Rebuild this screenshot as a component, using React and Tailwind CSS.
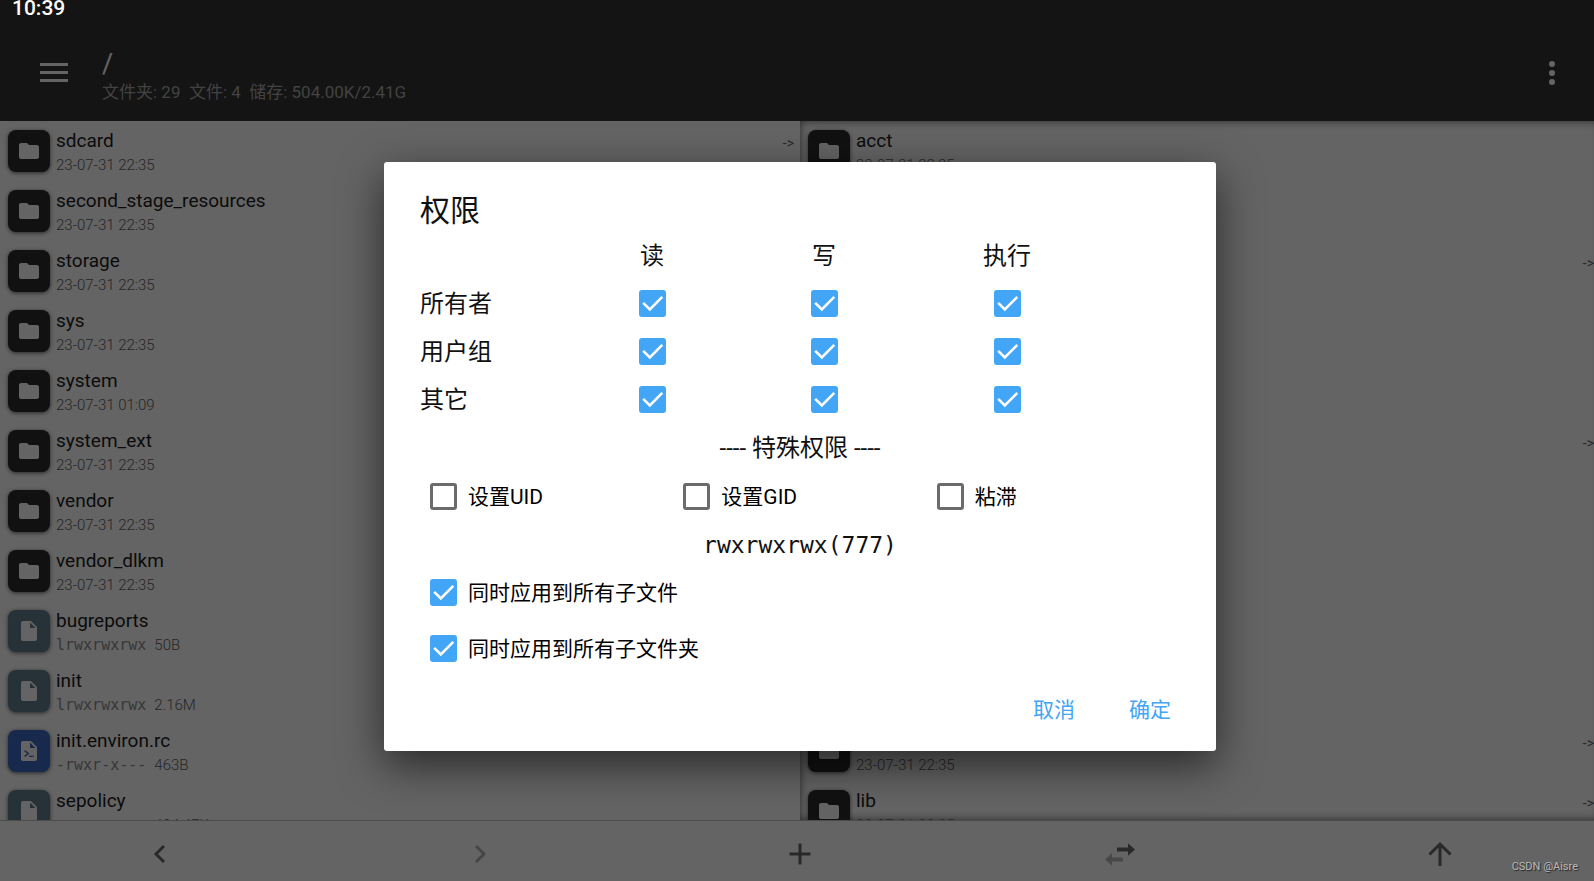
import React, { useState } from "react";
import { MdFolder, MdInsertDriveFile, MdAdd } from "react-icons/md";

const leftFiles = [
  { name: "sdcard", date: "23-07-31 22:35", link: true },
  { name: "second_stage_resources", date: "23-07-31 22:35" },
  { name: "storage", date: "23-07-31 22:35" },
  { name: "sys", date: "23-07-31 22:35" },
  { name: "system", date: "23-07-31 01:09" },
  { name: "system_ext", date: "23-07-31 22:35" },
  { name: "vendor", date: "23-07-31 22:35" },
  { name: "vendor_dlkm", date: "23-07-31 22:35" },
  { name: "bugreports", type: "file", mode: "lrwxrwxrwx", size: "50B" },
  { name: "init", type: "file", mode: "lrwxrwxrwx", size: "2.16M" },
  { name: "init.environ.rc", type: "script", mode: "-rwxr-x---", size: "463B" },
  { name: "sepolicy", type: "file", mode: "-rw-r--r--", size: "494.47K" },
];

const rightFiles = [
  { name: "acct", date: "23-07-31 22:35" },
  { name: "apex", date: "23-07-31 22:35" },
  { name: "bin", date: "23-07-31 22:35", link: true },
  { name: "cache", date: "23-07-31 22:35" },
  { name: "config", date: "23-07-31 22:35" },
  { name: "d", date: "23-07-31 22:35", link: true },
  { name: "data", date: "23-07-31 22:35" },
  { name: "data_mirror", date: "23-07-31 22:35" },
  { name: "debug_ramdisk", date: "23-07-31 22:35" },
  { name: "dev", date: "23-07-31 22:35" },
  { name: "etc", date: "23-07-31 22:35", link: true },
  { name: "lib", date: "23-07-31 22:35", link: true },
];

const iconColors = {
  folder: "bg-[#2b2b2b]",
  file: "bg-[#607d8b]",
  script: "bg-[#3c66c4]",
};

function FileIcon({ type = "folder" }) {
  return (
    <span
      className={`flex size-[42px] shrink-0 items-center justify-center rounded-lg text-[#fafafa] shadow-[0_1px_4px_rgba(0,0,0,0.6)] ${iconColors[type]}`}
    >
      {type === "folder" ? (
        <MdFolder className="size-6" />
      ) : (
        <MdInsertDriveFile className="size-6" />
      )}
      {type === "script" && (
        <svg
          viewBox="0 0 24 24"
          className="absolute size-6 fill-none stroke-[#3c66c4] stroke-[1.4]"
        >
          <path d="M7.6 11.6l3.8 2.9-3.8 2.9M12 17.4h4.7" />
        </svg>
      )}
    </span>
  );
}

function FileList({ files }) {
  return (
    <ul>
      {files.map((file) => (
        <li key={file.name} className="flex h-[60px] items-start pt-[9px] pr-1.5 pl-2">
          <FileIcon type={file.type} />
          <div className="ml-1.5 min-w-0 flex-1">
            <p className="text-[19px] leading-[22px] text-[#1c1c1c]">{file.name}</p>
            <p className="mt-[3px] text-[15px] leading-5 font-light text-[#606060]">
              {file.mode && (
                <span className="mr-2 font-['DejaVu_Sans_Mono',monospace] text-[#8a8a8a]">
                  {file.mode}
                </span>
              )}
              {file.date || file.size}
            </p>
          </div>
          {file.link && (
            <span className="mt-[5px] text-[14px] leading-4 text-[#666]">-&gt;</span>
          )}
        </li>
      ))}
    </ul>
  );
}

function Checkbox({ id, label, defaultChecked }) {
  const [checked, setChecked] = useState(!!defaultChecked);

  return (
    <span className="relative block size-[27px] shrink-0">
      <input
        id={id}
        type="checkbox"
        aria-label={label}
        checked={checked}
        onChange={(e) => setChecked(e.target.checked)}
        className="block size-[27px] appearance-none rounded-[3px] border-3 border-[#6b6b6b] checked:border-[#42a5f5] checked:bg-[#42a5f5]"
      />
      {checked && (
        <svg
          viewBox="0 0 27 27"
          className="pointer-events-none absolute inset-0 fill-none stroke-white stroke-[2.6]"
        >
          <path d="M4.2 12.8l6.6 6.6L23.3 6.9" />
        </svg>
      )}
    </span>
  );
}

function PermissionDialog() {
  const groups = ["所有者", "用户组", "其它"];
  const perms = ["读", "写", "执行"];
  const special = ["设置UID", "设置GID", "粘滞"];
  const apply = ["同时应用到所有子文件", "同时应用到所有子文件夹"];

  return (
    <div
      role="dialog"
      aria-labelledby="dialog-title"
      className="w-[52%] rounded-[3px] bg-white px-9 pt-7 pb-4 text-[#111] shadow-[0_14px_44px_rgba(0,0,0,0.6)]"
    >
      <h2 id="dialog-title" className="text-[30px] leading-[42px]">
        权限
      </h2>

      <table className="table-fixed text-2xl">
        <thead>
          <tr className="h-12">
            <td className="w-[146px]" />
            {perms.map((perm) => (
              <th
                key={perm}
                className="w-[172px] font-normal last:w-[194px]"
              >
                {perm}
              </th>
            ))}
          </tr>
        </thead>
        <tbody>
          {groups.map((group) => (
            <tr key={group} className="h-12">
              <th className="text-left font-normal">{group}</th>
              {perms.map((perm) => (
                <td key={perm} className="pb-0.5">
                  <div className="flex justify-center">
                    <Checkbox label={`${group} ${perm}`} defaultChecked />
                  </div>
                </td>
              ))}
            </tr>
          ))}
        </tbody>
      </table>

      <p className="text-center text-2xl leading-12">---- 特殊权限 ----</p>

      <div className="grid grid-cols-3">
        {special.map((name, i) => (
          <label
            key={name}
            htmlFor={`special-${i}`}
            className="flex h-[50px] items-center gap-[11px] pb-0.5 pl-2.5 text-[21px] text-black"
          >
            <Checkbox id={`special-${i}`} />
            <span className="pt-1">{name}</span>
          </label>
        ))}
      </div>

      <p className="pt-1 text-center font-['DejaVu_Sans_Mono',monospace] text-[23px] leading-[38px]">
        rwxrwxrwx(777)
      </p>

      {apply.map((name, i) => (
        <label
          key={name}
          htmlFor={`apply-${i}`}
          className="flex h-14 items-center gap-[11px] pl-2.5 text-[21px] text-black"
        >
          <Checkbox id={`apply-${i}`} defaultChecked />
          <span className="pt-1">{name}</span>
        </label>
      ))}

      <div className="mt-[11px] -mr-3 flex h-12 justify-end gap-3 text-[21px] text-[#42a5f5]">
        <button type="button" className="w-[84px]">
          取消
        </button>
        <button type="button" className="w-[84px]">
          确定
        </button>
      </div>
    </div>
  );
}

function Header() {
  return (
    <header className="flex h-[121px] shrink-0 flex-col bg-[#323232] text-[#fafafa]">
      <div className="relative z-20 h-6 pl-3 text-[21px] leading-4 font-medium text-white">
        10:39
      </div>
      <div className="flex flex-1 items-center pr-[45px] pl-10">
        <button type="button" aria-label="菜单">
          <svg viewBox="0 0 28 19" className="h-[19px] w-7 fill-current">
            <path d="M0 0h28v3H0zM0 8h28v3H0zM0 16h28v3H0z" />
          </svg>
        </button>
        <div className="ml-[34px] flex-1 pt-1.5">
          <h1 className="text-[27px] leading-8">/</h1>
          <p className="text-[17px] leading-6 whitespace-pre text-[#a6a6a6]">
            {"文件夹: 29  文件: 4  储存: 504.00K/2.41G"}
          </p>
        </div>
        <button type="button" aria-label="更多">
          <svg viewBox="0 0 6 24" className="h-6 w-1.5 fill-current">
            <circle cx="3" cy="3" r="3" />
            <circle cx="3" cy="12" r="3" />
            <circle cx="3" cy="21" r="3" />
          </svg>
        </button>
      </div>
    </header>
  );
}

function Footer() {
  return (
    <footer className="grid h-[61px] shrink-0 grid-cols-5 place-items-center border-t border-[#bbb] bg-[#fafafa] pt-1.5 text-[#686868]">
      <button type="button" aria-label="后退">
        <svg viewBox="0 0 36 36" className="size-9 fill-none stroke-current stroke-[3]">
          <path d="M22 10l-8 8 8 8" />
        </svg>
      </button>
      <button type="button" aria-label="前进" className="text-[#b0b0b0]">
        <svg viewBox="0 0 36 36" className="size-9 fill-none stroke-current stroke-[3]">
          <path d="M14 10l8 8-8 8" />
        </svg>
      </button>
      <button type="button" aria-label="新建">
        <MdAdd className="size-9" />
      </button>
      <button type="button" aria-label="同步">
        <svg viewBox="0 0 36 36" className="size-9 fill-current">
          <path d="M15 11.5h11V7.2l7 6.3-7 6.3v-4.3H15z" />
          <path d="M21 21.500h-11v-4.300l-7 6.300 7 6.300v-4.300h11z" className="fill-[#b4b4b4]" />
        </svg>
      </button>
      <button type="button" aria-label="上级">
        <svg viewBox="0 0 36 36" className="size-9 fill-none stroke-current stroke-[3]">
          <path d="M18 30V8M7.5 18.5L18 8l10.5 10.5" />
        </svg>
      </button>
    </footer>
  );
}

export default function App() {
  return (
    <div className="relative h-screen overflow-hidden font-[Roboto,'Noto_Sans_CJK_SC',sans-serif]">
      <div className="relative flex h-full w-[calc(100%+6px)] flex-col bg-[#fafafa]">
        <Header />
        <main className="flex min-h-0 flex-1 overflow-hidden">
          <section className="w-1/2">
            <FileList files={leftFiles} />
          </section>
          <section className="w-1/2 shadow-[inset_0_0_9px_rgba(0,0,0,0.6)]">
            <FileList files={rightFiles} />
          </section>
        </main>
        <Footer />

        <div className="absolute inset-0 z-10 flex items-center justify-center bg-black/60 pt-8">
          <PermissionDialog />
        </div>
      </div>
      <span className="absolute right-4 bottom-1.5 z-30 text-[11px] leading-4 text-[#bbb] [text-shadow:1px_1px_1px_#222]">
        CSDN @Aisre
      </span>
    </div>
  );
}
